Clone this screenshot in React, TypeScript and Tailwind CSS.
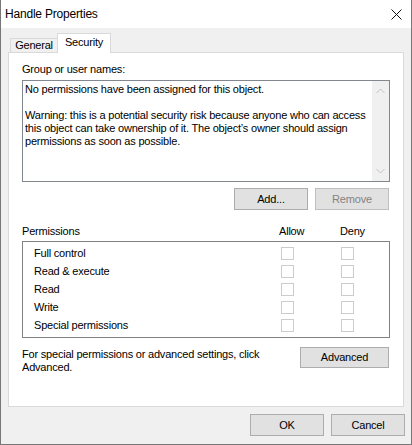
const PERMS = ["Full control", "Read & execute", "Read", "Write", "Special permissions"];

function Btn({ label, className = "" }: { label: string; className?: string }) {
  return (
    <div
      className={`flex items-center justify-center w-[74px] h-[22px] border border-[#adadad] bg-[#e1e1e1] ${className}`}
    >
      {label}
    </div>
  );
}

function Box() {
  return <div className="w-[13px] h-[13px] border border-[#cccccc] bg-white shrink-0" />;
}

function Chevron({ up }: { up?: boolean }) {
  return (
    <svg width="9" height="6" viewBox="0 0 9 6" className="shrink-0">
      <path
        d={up ? "M0.5 5 L4.5 1 L8.5 5" : "M0.5 1 L4.5 5 L8.5 1"}
        stroke="#c2c2c2"
        strokeWidth="1"
        fill="none"
      />
    </svg>
  );
}

export default function App() {
  return (
    <div className="w-[412px] h-[445px] border-x border-b border-[#777777] bg-[#f0f0f0] flex flex-col font-['Liberation_Sans',Arial,sans-serif] text-[11px] tracking-[-0.2px] text-black overflow-hidden">
      {/* title bar */}
      <div className="h-[28px] bg-white flex items-center justify-between pl-[4px] pr-[9px] shrink-0">
        <span className="text-[12px]">Handle Properties</span>
        <svg width="11" height="11" viewBox="0 0 11 11">
          <path d="M0.5 0.5 L10.5 10.5 M10.5 0.5 L0.5 10.5" stroke="#111" strokeWidth="1" />
        </svg>
      </div>

      {/* tabs */}
      <div className="h-[24px] flex items-end pl-[9px] shrink-0">
        <div className="w-[48px] h-[14px] border border-b-0 border-[#d9d9d9] bg-[#f0f0f0] flex items-center justify-center">
          General
        </div>
        <div className="relative z-10 -ml-px -mb-px w-[54px] h-[20px] border border-b-0 border-[#d9d9d9] bg-white flex items-center justify-center pb-[2px]">
          Security
        </div>
      </div>

      {/* panel */}
      <div className="mx-[7px] h-[355px] border border-[#d9d9d9] bg-white pl-[13px] pt-[8px] flex flex-col shrink-0">
        <div className="h-[16px] leading-[16px]">Group or user names:</div>

        <div className="mt-[3px] w-[368px] h-[102px] border border-[#828790] flex">
          <div className="flex-1 pl-[2px] pt-[2px] leading-[13px] whitespace-nowrap overflow-hidden">
            No permissions have been assigned for this object.
            <br />
            <br />
            Warning: this is a potential security risk because anyone who can access
            <br />
            this object can take ownership of it. The object’s owner should assign
            <br />
            permissions as soon as possible.
          </div>
          <div className="w-[17px] bg-[#f0f0f0] flex flex-col items-center justify-between py-[7px]">
            <Chevron up />
            <Chevron />
          </div>
        </div>

        <div className="mt-[6px] w-[368px] flex justify-end gap-[7px] pr-[1px]">
          <Btn label="Add..." className="border-[#0078d7]" />
          <Btn label="Remove" className="bg-[#cccccc] border-[#bfbfbf] text-[#838383]" />
        </div>

        <div className="mt-[13px] h-[16px] leading-[16px] flex w-[368px]">
          <span className="w-[257px]">Permissions</span>
          <span className="w-[61px]">Allow</span>
          <span>Deny</span>
        </div>

        <div className="mt-[2px] w-[368px] h-[97px] border border-[#828282] pt-[2px] pl-[11px]">
          {PERMS.map((p) => (
            <div key={p} className="h-[18px] flex items-center">
              <span className="w-[247px]">{p}</span>
              <Box />
              <div className="ml-[47px]">
                <Box />
              </div>
            </div>
          ))}
        </div>

        <div className="mt-[9px] w-[368px] flex items-start">
          <div className="flex-1 leading-[13px] pt-[1px]">
            For special permissions or advanced settings, click
            <br />
            Advanced.
          </div>
          <div className="mr-[1px] flex items-center justify-center w-[89px] h-[21px] border border-[#adadad] bg-[#e1e1e1]">
            Advanced
          </div>
        </div>
      </div>

      {/* footer */}
      <div className="mt-[7px] flex justify-end gap-[7px] pr-[6px]">
        <Btn label="OK" />
        <Btn label="Cancel" />
      </div>
    </div>
  );
}
